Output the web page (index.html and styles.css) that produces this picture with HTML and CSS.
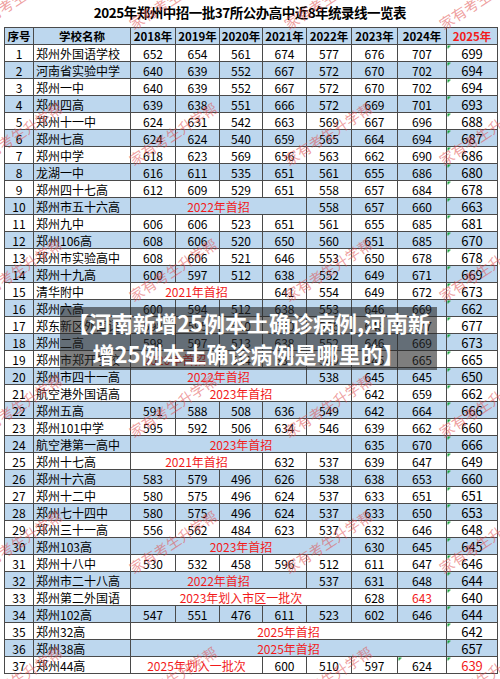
FILE: index.html
```html
<!DOCTYPE html>
<html lang="zh-CN">
<head>
<meta charset="utf-8">
<title>2025年郑州中招一批37所公办高中近8年统录线一览表</title>
<link rel="stylesheet" href="styles.css">
</head>
<body>
<div class="page">
  <div class="title">2025年郑州中招一批37所公办高中近8年统录线一览表</div>
  <div class="wrap">
  <table class="grid">
    <colgroup>
      <col class="w-no"><col class="w-nm"><col class="w45"><col class="w44"><col class="w43"><col class="w44"><col class="w45"><col class="w46"><col class="w49"><col class="w51">
    </colgroup>
    <tr class="b hd"><td>序号</td><td>学校名称</td><td>2018年</td><td>2019年</td><td>2020年</td><td>2021年</td><td>2022年</td><td>2023年</td><td>2024年</td><td class="red">2025年</td></tr>
    <tr><td>1</td><td class="nm">郑州外国语学校</td><td>652</td><td>654</td><td>561</td><td>674</td><td>577</td><td>676</td><td>707</td><td class="c25">699</td></tr>
    <tr class="b"><td>2</td><td class="nm">河南省实验中学</td><td>640</td><td>639</td><td>552</td><td>667</td><td>572</td><td>670</td><td>702</td><td class="c25">694</td></tr>
    <tr><td>3</td><td class="nm">郑州一中</td><td>640</td><td>639</td><td>552</td><td>667</td><td>572</td><td>670</td><td>702</td><td class="c25">694</td></tr>
    <tr class="b"><td>4</td><td class="nm">郑州四高</td><td>639</td><td>638</td><td>551</td><td>666</td><td>572</td><td>669</td><td>701</td><td class="c25">693</td></tr>
    <tr><td>5</td><td class="nm">郑州十一中</td><td>624</td><td>631</td><td>542</td><td>663</td><td>569</td><td>667</td><td>696</td><td class="c25">688</td></tr>
    <tr class="b"><td>6</td><td class="nm">郑州七高</td><td>624</td><td>624</td><td>540</td><td>659</td><td>565</td><td>664</td><td>694</td><td class="c25">687</td></tr>
    <tr><td>7</td><td class="nm">郑州中学</td><td>618</td><td>623</td><td>569</td><td>656</td><td>563</td><td>662</td><td>690</td><td class="c25">686</td></tr>
    <tr class="b"><td>8</td><td class="nm">龙湖一中</td><td>616</td><td>611</td><td>535</td><td>651</td><td>561</td><td>655</td><td>686</td><td class="c25">680</td></tr>
    <tr><td>9</td><td class="nm">郑州四十七高</td><td>612</td><td>609</td><td>529</td><td>651</td><td>558</td><td>657</td><td>684</td><td class="c25">678</td></tr>
    <tr class="b"><td>10</td><td class="nm">郑州市五十六高</td><td colspan="4" class="note">2022年首招</td><td>558</td><td>657</td><td>660</td><td class="c25">663</td></tr>
    <tr><td>11</td><td class="nm">郑州九中</td><td>606</td><td>606</td><td>523</td><td>651</td><td>561</td><td>655</td><td>685</td><td class="c25">681</td></tr>
    <tr class="b"><td>12</td><td class="nm">郑州106高</td><td>608</td><td>606</td><td>520</td><td>650</td><td>560</td><td>651</td><td>685</td><td class="c25">670</td></tr>
    <tr><td>13</td><td class="nm">郑州市实验高中</td><td>608</td><td>606</td><td>521</td><td>646</td><td>553</td><td>650</td><td>678</td><td class="c25">678</td></tr>
    <tr class="b"><td>14</td><td class="nm">郑州十九高</td><td>600</td><td>597</td><td>512</td><td>638</td><td>552</td><td>649</td><td>671</td><td class="c25">669</td></tr>
    <tr><td>15</td><td class="nm">清华附中</td><td colspan="3" class="note">2021年首招</td><td>641</td><td>554</td><td>649</td><td>672</td><td class="c25">673</td></tr>
    <tr class="b"><td>16</td><td class="nm">郑州六高</td><td>600</td><td>594</td><td>512</td><td>638</td><td>553</td><td>646</td><td>669</td><td class="c25">662</td></tr>
    <tr><td>17</td><td class="nm">郑东新区外国语</td><td>598</td><td>595</td><td>510</td><td>640</td><td>556</td><td>648</td><td>677</td><td class="c25">677</td></tr>
    <tr class="b"><td>18</td><td class="nm">郑州二高</td><td>598</td><td>597</td><td>513</td><td>638</td><td>552</td><td>646</td><td>669</td><td class="c25">673</td></tr>
    <tr><td>19</td><td class="nm">郑州市郑开学校</td><td colspan="2" class="note">2020年首招</td><td>514</td><td>637</td><td>549</td><td>645</td><td>665</td><td class="c25">665</td></tr>
    <tr class="b"><td>20</td><td class="nm">郑州市四十一高</td><td colspan="4" class="note">2022年首招</td><td>538</td><td>645</td><td>645</td><td class="c25">650</td></tr>
    <tr><td>21</td><td class="nm">航空港外国语高</td><td colspan="5" class="note">2023年首招</td><td>642</td><td>659</td><td class="c25">662</td></tr>
    <tr class="b"><td>22</td><td class="nm">郑州五高</td><td>591</td><td>588</td><td>508</td><td>636</td><td>549</td><td>642</td><td>664</td><td class="c25">666</td></tr>
    <tr><td>23</td><td class="nm">郑州101中学</td><td>595</td><td>592</td><td>506</td><td>634</td><td>546</td><td>639</td><td>662</td><td class="c25">660</td></tr>
    <tr class="b"><td>24</td><td class="nm">航空港第一高中</td><td colspan="5" class="note">2023年首招</td><td>635</td><td>670</td><td class="c25">666</td></tr>
    <tr><td>25</td><td class="nm">郑州十七高</td><td colspan="3" class="note">2021年首招</td><td>632</td><td>537</td><td>639</td><td>647</td><td class="c25">649</td></tr>
    <tr class="b"><td>26</td><td class="nm">郑州十六高</td><td>583</td><td>579</td><td>496</td><td>626</td><td>538</td><td>638</td><td>653</td><td class="c25">660</td></tr>
    <tr><td>27</td><td class="nm">郑州十二中</td><td>580</td><td>575</td><td>496</td><td>624</td><td>537</td><td>633</td><td>651</td><td class="c25">651</td></tr>
    <tr class="b"><td>28</td><td class="nm">郑州七十四中</td><td>580</td><td>575</td><td>496</td><td>624</td><td>537</td><td>633</td><td>650</td><td class="c25">653</td></tr>
    <tr><td>29</td><td class="nm">郑州三十一高</td><td>556</td><td>562</td><td>484</td><td>623</td><td>537</td><td>632</td><td>646</td><td class="c25">648</td></tr>
    <tr class="b"><td>30</td><td class="nm">郑州103高</td><td colspan="5" class="note">2023年首招</td><td>630</td><td>645</td><td class="c25">645</td></tr>
    <tr><td>31</td><td class="nm">郑州十八中</td><td>530</td><td>532</td><td>458</td><td>596</td><td>512</td><td>611</td><td>647</td><td class="c25">646</td></tr>
    <tr class="b"><td>32</td><td class="nm">郑州市二十八高</td><td colspan="4" class="note">2022年首招</td><td>537</td><td>631</td><td>648</td><td class="c25">644</td></tr>
    <tr><td>33</td><td class="nm">郑州第二外国语</td><td colspan="5" class="note">2023年划入市区一批次</td><td>628</td><td class="red">643</td><td class="c25">640</td></tr>
    <tr class="b"><td>34</td><td class="nm">郑州102高</td><td>547</td><td>551</td><td>476</td><td>611</td><td>523</td><td>602</td><td>646</td><td class="c25">644</td></tr>
    <tr><td>35</td><td class="nm">郑州32高</td><td colspan="7" class="note">2025年首招</td><td class="c25">642</td></tr>
    <tr class="b"><td>36</td><td class="nm">郑州38高</td><td colspan="7" class="note">2025年首招</td><td class="c25">657</td></tr>
    <tr><td>37</td><td class="nm">郑州44高</td><td colspan="3" class="note">2025年划入一批次</td><td>600</td><td>510</td><td>597</td><td class="mark">624</td><td class="c25 red">639</td></tr>
  </table>
  </div>

  <div class="wm">
    <span>家有考生升学帮</span><span>家有考生升学帮</span><span>家有考生升学帮</span><span>家有考生升学帮</span>
    <span>家有考生升学帮</span><span>家有考生升学帮</span><span>家有考生升学帮</span><span>家有考生升学帮</span>
    <span>家有考生升学帮</span><span>家有考生升学帮</span><span>家有考生升学帮</span><span>家有考生升学帮</span>
    <span>家有考生升学帮</span><span>家有考生升学帮</span><span>家有考生升学帮</span><span>家有考生升学帮</span>
    <span>家有考生升学帮</span><span>家有考生升学帮</span><span>家有考生升学帮</span><span>家有考生升学帮</span>
    <span>家有考生升学帮</span><span>家有考生升学帮</span><span>家有考生升学帮</span><span>家有考生升学帮</span>
  </div>

  <div class="caption">
    <div class="cap-line">【河南新增25例本土确诊病例,河南新</div>
    <div class="cap-line">增25例本土确诊病例是哪里的】</div>
  </div>
</div>
</body>
</html>
```

FILE: styles.css
```css
html, body {
  margin: 0;
  padding: 0;
  background: #ffffff;
}

.page {
  position: relative;
  width: 500px;
  height: 679px;
  overflow: hidden;
  font-family: "Noto Sans CJK SC", "Noto Sans", sans-serif;
  color: #000;
}

.title {
  height: 27px;
  line-height: 25px;
  text-align: center;
  font-size: 13.5px;
  font-weight: bold;
  letter-spacing: -0.5px;
  color: #000;
}

.wrap {
  padding-left: 4px;
}

.grid {
  border-collapse: collapse;
  table-layout: fixed;
  width: 493px;
}

.w-no { width: 29px; }
.w-nm { width: 97px; }
.w43 { width: 43px; }
.w44 { width: 44px; }
.w45 { width: 45px; }
.w46 { width: 46px; }
.w49 { width: 49px; }
.w51 { width: 51px; }

.grid td {
  border: 1px solid #4a4a4a;
  height: 16px;
  padding: 0;
  line-height: 15px;
  text-align: center;
  font-size: 12px;
  color: #000;
  white-space: nowrap;
  overflow: hidden;
}

.grid tr.b td {
  background-color: #bdd7ee;
}

.grid tr.hd td {
  font-weight: bold;
  font-size: 11.5px;
}

.grid td.nm {
  text-align: left;
  padding-left: 2px;
  font-size: 12px;
}

.grid td.note {
  color: #f21b1b;
  font-size: 12px;
}

.grid td.red {
  color: #f21b1b;
}

.grid td.c25 {
  font-size: 13px;
  background-image: linear-gradient(135deg, #17a03a 2.5px, transparent 2.5px);
}

.grid td.mark {
  background-image: linear-gradient(135deg, #17a03a 2.5px, transparent 2.5px);
}

.wm {
  position: absolute;
  left: -60px;
  top: -71px;
  display: grid;
  grid-template-columns: repeat(4, 155px);
  grid-template-rows: repeat(6, 136px);
  pointer-events: none;
}

.wm span {
  display: flex;
  align-items: center;
  justify-content: center;
  font-size: 14.5px;
  color: rgba(225, 80, 80, 0.55);
  transform: rotate(-33deg);
  white-space: nowrap;
}

.caption {
  position: absolute;
  left: 60px;
  top: 307px;
  width: 377px;
  height: 63px;
  background: rgba(40, 40, 40, 0.6);
  color: #fff;
  font-weight: bold;
  font-size: 22px;
  text-align: center;
}

.cap-line {
  height: 31px;
  line-height: 31px;
  white-space: nowrap;
}
```
